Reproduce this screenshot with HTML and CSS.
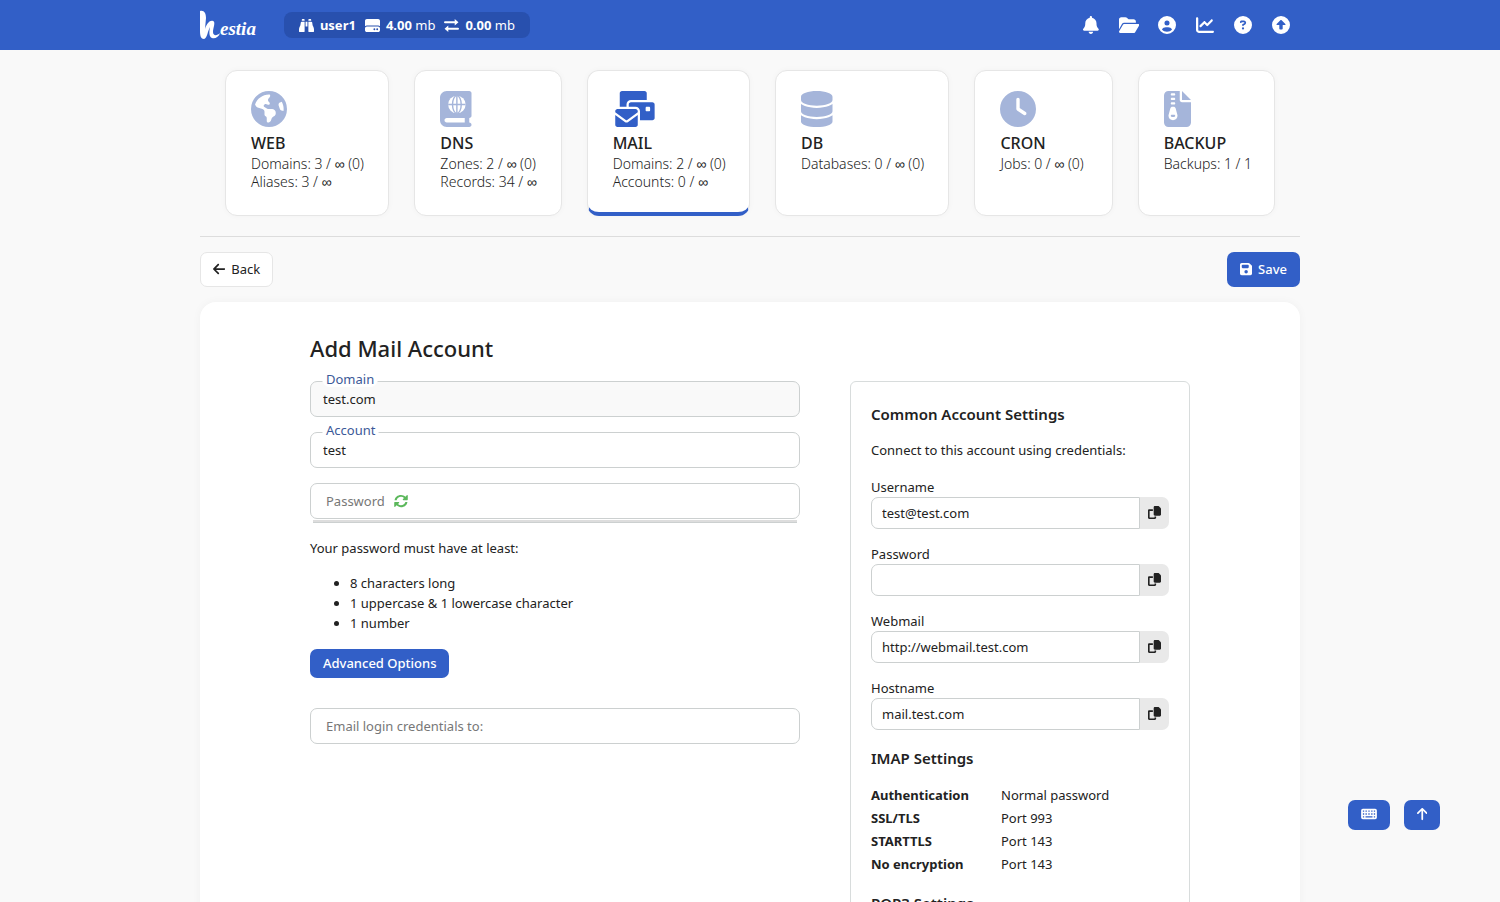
FILE: index.html
```html
<!DOCTYPE html>
<html lang="en">
<head>
<meta charset="utf-8">
<meta name="viewport" content="width=device-width, initial-scale=1">
<title>Add Mail Account - Hestia</title>
<link rel="stylesheet" href="styles.css">
</head>
<body>
<svg class="sprite" aria-hidden="true">
  <symbol id="copy" viewBox="0 0 512 512"><path d="M272 0H396.100c12.700 0 24.900 5.100 33.900 14.100l67.900 67.900c9 9 14.100 21.200 14.100 33.900V336c0 26.500-21.500 48-48 48H272c-26.500 0-48-21.500-48-48V48c0-26.500 21.500-48 48-48zM48 128h144v64H64V448H256V416h64v48c0 26.500-21.500 48-48 48H48c-26.500 0-48-21.500-48-48V176c0-26.500 21.500-48 48-48z"/></symbol>
</svg>
<header class="topbar">
  <div class="container topbar-inner">
    <a class="logo" href="#" aria-label="Hestia">
      <svg class="logo-mark" viewBox="0 0 20 30" aria-hidden="true"><path d="M0 1C4 0 6 3 6 8L5 19C7 13 10 10 13 11C16 12 13 18 13 22C13 26 17 26 20 23C19 27 15 29 12 28C9 27 9 22 10 17C8 20 7 29 4 29C1 29 0 26 0 21Z"/></svg><span>estia</span>
    </a>
    <div class="usage">
      <span class="usage-item"><svg class="i14" viewBox="0 0 512 512"><path d="M128 32h32c17.700 0 32 14.300 32 32V96H96V64c0-17.700 14.300-32 32-32zm64 96V448c0 17.700-14.300 32-32 32H32c-17.700 0-32-14.300-32-32V388.900c0-34.600 9.400-68.600 27.200-98.300C40.900 267.800 49.700 242.400 53 216L60.500 156c2-16 15.600-28 31.800-28H192zm227.800 0c16.100 0 29.800 12 31.800 28L459 216c3.300 26.400 12.100 51.800 25.800 74.600c17.800 29.700 27.200 63.700 27.200 98.300V448c0 17.700-14.300 32-32 32H352c-17.700 0-32-14.300-32-32V128h99.800zM320 64c0-17.700 14.300-32 32-32h32c17.700 0 32 14.300 32 32V96H320V64zm-32 64V288H224V128h64z"/></svg><b>user1</b></span>
      <span class="usage-item"><svg class="i14" viewBox="0 0 512 512"><path d="M0 96C0 60.700 28.700 32 64 32H448c35.300 0 64 28.700 64 64V280.400c-17-15.200-39.400-24.400-64-24.400H64c-24.600 0-47 9.200-64 24.400V96zM64 288H448c35.300 0 64 28.700 64 64v64c0 35.300-28.700 64-64 64H64c-35.300 0-64-28.700-64-64V352c0-35.300 28.700-64 64-64zM320 416a32 32 0 1 0 0-64 32 32 0 1 0 0 64zm128-32a32 32 0 1 0 -64 0 32 32 0 1 0 64 0z"/></svg><span><b>4.00</b> mb</span></span>
      <span class="usage-item"><svg class="i14" viewBox="0 0 448 448"><path d="M320 32L432 128L320 224V160H32a32 32 0 0 1 0-64H320zM128 224V288H416a32 32 0 0 1 0 64H128V416L16 320z"/></svg><span><b>0.00</b> mb</span></span>
    </div>
    <nav class="menu" aria-label="Account">
      <button class="menu-link" type="button" aria-label="Notifications"><svg viewBox="0 0 448 512"><path d="M224 0c-17.700 0-32 14.300-32 32V51.200C119 66 64 130.600 64 208v18.800c0 47-17.300 92.400-48.500 127.600l-7.400 8.300c-8.400 9.400-10.400 22.900-5.300 34.400S19.400 416 32 416H416c12.600 0 24-7.400 29.200-18.900s3.100-25-5.300-34.400l-7.400-8.300C401.300 319.200 384 273.900 384 226.800V208c0-77.400-55-142-128-156.800V32c0-17.700-14.300-32-32-32zm45.300 493.300c12-12 18.700-28.300 18.700-45.300H224 160c0 17 6.700 33.300 18.700 45.300s28.300 18.700 45.300 18.700s33.300-6.700 45.300-18.700z"/></svg></button>
      <a class="menu-link" href="#" aria-label="File manager"><svg viewBox="0 0 576 512"><path d="M88.700 223.800L0 375.800V96C0 60.700 28.700 32 64 32H181.500c17 0 33.300 6.700 45.300 18.700l26.500 26.500c12 12 28.300 18.700 45.300 18.700H416c35.300 0 64 28.700 64 64v32H144c-22.800 0-43.800 12.100-55.300 31.800zm27.600 16.100C122.100 230 132.600 224 144 224H544c11.500 0 22 6.100 27.700 16.100s5.700 22.200-.1 32.100l-112 192C453.900 474 443.400 480 432 480H32c-11.500 0-22-6.100-27.700-16.100s-5.700-22.200 .1-32.100l112-192z"/></svg></a>
      <a class="menu-link" href="#" aria-label="Profile"><svg viewBox="0 0 512 512"><path d="M399 384.200C376.900 345.800 335.400 320 288 320H224c-47.400 0-88.900 25.800-111 64.200c35.200 39.200 86.200 63.800 143 63.800s107.800-24.700 143-63.800zM0 256a256 256 0 1 1 512 0A256 256 0 1 1 0 256zm256 16a72 72 0 1 0 0-144 72 72 0 1 0 0 144z"/></svg></a>
      <a class="menu-link" href="#" aria-label="Statistics"><svg viewBox="0 0 512 512"><path d="M64 64c0-17.700-14.300-32-32-32S0 46.300 0 64V400c0 44.200 35.800 80 80 80H480c17.700 0 32-14.300 32-32s-14.300-32-32-32H80c-8.800 0-16-7.200-16-16V64zm406.600 86.600c12.500-12.500 12.500-32.800 0-45.300s-32.800-12.500-45.300 0L320 210.700l-57.400-57.400c-12.500-12.500-32.800-12.500-45.300 0l-112 112c-12.500 12.500-12.500 32.800 0 45.300s32.800 12.500 45.300 0L240 221.300l57.400 57.400c12.500 12.500 32.800 12.500 45.300 0l128-128z"/></svg></a>
      <a class="menu-link" href="#" aria-label="Help"><svg viewBox="0 0 512 512"><path d="M256 512A256 256 0 1 0 256 0a256 256 0 1 0 0 512zM169.800 165.300c7.900-22.300 29.100-37.300 52.800-37.300h58.300c34.900 0 63.100 28.300 63.100 63.100c0 22.600-12.100 43.500-31.700 54.800L280 264.400c-.2 13-10.900 23.600-24 23.600c-13.300 0-24-10.700-24-24V250.500c0-8.600 4.600-16.500 12.100-20.800l44.300-25.400c4.700-2.700 7.600-7.700 7.600-13.100c0-8.400-6.800-15.100-15.100-15.100H222.600c-3.400 0-6.400 2.100-7.500 5.300l-.4 1.200c-4.400 12.500-18.200 19-30.600 14.600s-19-18.200-14.600-30.600l.4-1.200zM224 352a32 32 0 1 1 64 0 32 32 0 1 1 -64 0z"/></svg></a>
      <a class="menu-link" href="#" aria-label="Log out"><svg viewBox="0 0 512 512"><path d="M256 512A256 256 0 1 0 256 0a256 256 0 1 0 0 512zm11.300-395.300l112 112c4.600 4.600 5.900 11.500 3.500 17.400s-8.300 9.900-14.800 9.900H304v96c0 17.700-14.300 32-32 32H240c-17.700 0-32-14.300-32-32V256H144c-6.500 0-12.300-3.900-14.800-9.900s-1.100-12.900 3.500-17.400l112-112c6.200-6.200 16.400-6.200 22.600 0z"/></svg></a>
    </nav>
  </div>
</header>

<main class="container">
  <nav class="cards" aria-label="Sections">
    <a class="card" href="#">
      <svg viewBox="0 0 512 512"><path d="M57.700 193l9.400 16.400c8.300 14.500 21.900 25.200 38 29.800L163 255.700c17.200 4.900 29 20.600 29 38.500v39.900c0 11 6.200 21 16 25.900s16 14.900 16 25.900v39c0 15.600 14.900 26.900 29.900 22.600c16.100-4.600 28.600-17.500 32.700-33.800l2.800-11.200c4.200-16.900 15.200-31.400 30.300-40l8.100-4.600c15-8.500 24.200-24.500 24.200-41.700v-8.300c0-12.700-5.100-24.900-14.100-33.900l-3.900-3.900c-9-9-21.200-14.100-33.900-14.100H257c-11.100 0-22.100-2.900-31.800-8.400l-34.500-19.700c-4.300-2.500-7.600-6.500-9.200-11.200c-3.200-9.600 1.100-20 10.200-24.500l5.900-3c6.600-3.300 14.300-3.900 21.300-1.500l23.200 7.700c8.200 2.700 17.200-.4 21.900-7.500c4.700-7 4.200-16.300-1.200-22.800l-13.600-16.300c-10-12-9.900-29.500 .3-41.300l15.700-18.300c8.800-10.300 10.200-25 3.500-36.700l-2.400-4.200c-3.500-.2-6.900-.3-10.400-.3C163.100 48 84.400 108.900 57.700 193zM464 256c0-36.800-9.600-71.400-26.400-101.500L412 164.800c-15.700 6.300-23.800 23.800-18.500 39.800l16.900 50.700c3.500 10.400 12 18.300 22.600 20.900l29.100 7.300c1.200-9 1.800-18.200 1.800-27.500zM0 256a256 256 0 1 1 512 0A256 256 0 1 1 0 256z"/></svg>
      <strong>WEB</strong><span>Domains: 3 / <b>∞</b> (0)</span><span>Aliases: 3 / <b>∞</b></span>
    </a>
    <a class="card" href="#">
      <svg viewBox="0 0 448 512"><path d="M0 96C0 43 43 0 96 0H384h32c17.700 0 32 14.300 32 32V352c0 17.700-14.300 32-32 32v64c17.700 0 32 14.300 32 32s-14.300 32-32 32H384 96c-53 0-96-43-96-96V96zM64 416c0 17.700 14.300 32 32 32H352V384H96c-17.700 0-32 14.300-32 32z"/><circle cx="240" cy="192" r="124" fill="#fff"/><g fill="none" stroke="#a5b5da" stroke-width="20"><path d="M116 192h248M240 68v248"/><ellipse cx="240" cy="192" rx="62" ry="126"/></g></svg>
      <strong>DNS</strong><span>Zones: 2 / <b>∞</b> (0)</span><span>Records: 34 / <b>∞</b></span>
    </a>
    <a class="card active" href="#" aria-current="page">
      <svg viewBox="0 0 640 512"><path d="M128 0C110.300 0 96 14.300 96 32V224h96V192c0-35.300 28.700-64 64-64H480V32c0-17.700-14.300-32-32-32H128zM256 160c-17.700 0-32 14.300-32 32v32h96c35.300 0 64 28.700 64 64V416H560c17.700 0 32-14.300 32-32V192c0-17.700-14.300-32-32-32H256zm224 64h32c8.800 0 16 7.200 16 16v32c0 8.800-7.200 16-16 16H480c-8.800 0-16-7.200-16-16V240c0-8.800 7.200-16 16-16zM64 256c-17.700 0-32 14.300-32 32v13L187.100 415.900c1.400 1 3.100 1.600 4.900 1.600s3.500-.6 4.900-1.600L352 301V288c0-17.700-14.300-32-32-32H64zm288 84.800L216 441.600c-6.900 5.100-15.300 7.900-24 7.900s-17-2.800-24-7.900L32 340.800V480c0 17.700 14.300 32 32 32H320c17.700 0 32-14.300 32-32V340.800z"/></svg>
      <strong>MAIL</strong><span>Domains: 2 / <b>∞</b> (0)</span><span>Accounts: 0 / <b>∞</b></span>
    </a>
    <a class="card" href="#">
      <svg viewBox="0 0 448 512"><path d="M448 80v48c0 44.200-100.300 80-224 80S0 172.200 0 128V80C0 35.800 100.300 0 224 0S448 35.800 448 80zM393.200 214.700c20.800-7.400 39.900-16.900 54.800-28.600V288c0 44.200-100.300 80-224 80S0 332.200 0 288V186.100c14.900 11.800 34 21.200 54.800 28.600C99.700 230.700 159.500 240 224 240s124.300-9.300 169.200-25.300zM0 346.100c14.900 11.800 34 21.200 54.800 28.600C99.700 390.700 159.500 400 224 400s124.300-9.300 169.200-25.300c20.800-7.400 39.900-16.900 54.800-28.600V432c0 44.200-100.300 80-224 80S0 476.200 0 432V346.100z"/></svg>
      <strong>DB</strong><span>Databases: 0 / <b>∞</b> (0)</span>
    </a>
    <a class="card" href="#">
      <svg viewBox="0 0 512 512"><path d="M256 0a256 256 0 1 1 0 512A256 256 0 1 1 256 0zM232 120V256c0 8 4 15.500 10.700 20l96 64c11 7.400 25.900 4.400 33.300-6.700s4.400-25.900-6.700-33.300L280 243.200V120c0-13.300-10.700-24-24-24s-24 10.700-24 24z"/></svg>
      <strong>CRON</strong><span>Jobs: 0 / <b>∞</b> (0)</span>
    </a>
    <a class="card" href="#">
      <svg viewBox="0 0 384 512"><path fill-rule="evenodd" d="M64 0C28.700 0 0 28.700 0 64V448c0 35.300 28.700 64 64 64H320c35.300 0 64-28.700 64-64V160H256c-17.700 0-32-14.300-32-32V0H64zM256 0V128H384L256 0zM96 48c0-8.800 7.200-16 16-16h32c8.800 0 16 7.200 16 16s-7.200 16-16 16H112c-8.800 0-16-7.200-16-16zm0 64c0-8.800 7.200-16 16-16h32c8.800 0 16 7.200 16 16s-7.200 16-16 16H112c-8.800 0-16-7.200-16-16zm0 64c0-8.800 7.200-16 16-16h32c8.800 0 16 7.200 16 16s-7.200 16-16 16H112c-8.800 0-16-7.200-16-16zm-6.300 71.800c3.700-14 16.400-23.800 30.900-23.800h14.800c14.500 0 27.200 9.700 30.900 23.800l23.500 88.200c1.400 5.400 2.100 10.900 2.100 16.400c0 35.200-28.800 63.700-64 63.700s-64-28.500-64-63.700c0-5.500 .7-11.100 2.100-16.400l23.500-88.200zM112 336c-8.800 0-16 7.200-16 16s7.200 16 16 16h32c8.800 0 16-7.200 16-16s-7.200-16-16-16H112z"/></svg>
      <strong>BACKUP</strong><span>Backups: 1 / 1</span>
    </a>
  </nav>

  <div class="toolbar">
    <a class="button secondary" href="#"><svg viewBox="0 0 448 512"><path d="M9.400 233.400c-12.500 12.500-12.500 32.800 0 45.300l160 160c12.500 12.500 32.800 12.500 45.300 0s12.500-32.800 0-45.300L109.200 288 416 288c17.700 0 32-14.300 32-32s-14.300-32-32-32l-306.700 0L214.600 118.600c12.500-12.500 12.500-32.800 0-45.300s-32.800-12.500-45.300 0l-160 160z"/></svg>Back</a>
    <button class="button primary" type="submit" form="mail-form"><svg viewBox="0 0 448 512"><path d="M64 32C28.700 32 0 60.700 0 96V416c0 35.300 28.700 64 64 64H384c35.300 0 64-28.700 64-64V173.300c0-17-6.700-33.300-18.700-45.300L352 50.700C340 38.700 323.700 32 306.700 32H64zm0 96c0-17.700 14.300-32 32-32H288c17.700 0 32 14.300 32 32v64c0 17.700-14.300 32-32 32H96c-17.700 0-32-14.300-32-32V128zM224 288a64 64 0 1 1 0 128 64 64 0 1 1 0-128z"/></svg>Save</button>
  </div>

  <form class="panel" id="mail-form">
    <h1>Add Mail Account</h1>
    <div class="columns">
      <div class="left">
        <div class="field raised"><label for="domain">Domain</label><input id="domain" type="text" value="test.com" disabled></div>
        <div class="field raised"><label for="account">Account</label><input id="account" type="text" value="test"></div>
        <div class="field">
          <div class="inner"><label for="password">Password</label><button class="refresh" type="button" aria-label="Generate password"><svg viewBox="0 0 512 512"><path d="M20 224C36 110 132 32 256 32c66 0 120 26 160 66l52-52c16-14 36-4 36 16V200c0 14-8 24-24 24H344c-22 0-30-24-16-38l38-38c-30-28-66-44-110-44-78 0-142 50-160 120zM492 288C476 402 380 480 256 480c-66 0-120-26-160-66l-52 52c-16 14-36 4-36-16V312c0-14 8-24 24-24H168c22 0 30 24 16 38l-38 38c30 28 66 44 110 44 78 0 142-50 160-120z"/></svg></button></div>
          <input id="password" type="text">
          <div class="strength"></div>
        </div>
        <p>Your password must have at least:</p>
        <ul><li>8 characters long</li><li>1 uppercase &amp; 1 lowercase character</li><li>1 number</li></ul>
        <button class="button primary advanced" type="button">Advanced Options</button>
        <div class="field"><div class="inner"><label for="email">Email login credentials to:</label></div><input id="email" type="email"></div>
      </div>
      <aside class="info">
        <h2>Common Account Settings</h2>
        <p>Connect to this account using credentials:</p>
        <div class="copies">
          <div><label for="c-user">Username</label><div class="copy-row"><input id="c-user" type="text" value="test@test.com" readonly><button type="button" aria-label="Copy username"><svg><use href="#copy"/></svg></button></div></div>
          <div><label for="c-pass">Password</label><div class="copy-row"><input id="c-pass" type="text" readonly><button type="button" aria-label="Copy password"><svg><use href="#copy"/></svg></button></div></div>
          <div><label for="c-web">Webmail</label><div class="copy-row"><input id="c-web" type="text" value="http://webmail.test.com" readonly><button type="button" aria-label="Copy webmail"><svg><use href="#copy"/></svg></button></div></div>
          <div><label for="c-host">Hostname</label><div class="copy-row"><input id="c-host" type="text" value="mail.test.com" readonly><button type="button" aria-label="Copy hostname"><svg><use href="#copy"/></svg></button></div></div>
        </div>
        <h2>IMAP Settings</h2>
        <dl><dt>Authentication</dt><dd>Normal password</dd><dt>SSL/TLS</dt><dd>Port 993</dd><dt>STARTTLS</dt><dd>Port 143</dd><dt>No encryption</dt><dd>Port 143</dd></dl>
        <h2>POP3 Settings</h2>
      </aside>
    </div>
  </form>
</main>

<div class="floating">
  <button class="button primary" type="button" aria-label="Shortcuts"><svg class="keyboard" viewBox="0 0 576 512"><path fill-rule="evenodd" d="M64 64H512a64 64 0 0 1 64 64V384a64 64 0 0 1-64 64H64a64 64 0 0 1-64-64V128a64 64 0 0 1 64-64zM64 128v48h48v-48zm96 0v48h48v-48zm104 0v48h48v-48zm104 0v48h48v-48zm96 0v48h48v-48zM64 232v48h48v-48zm96 0v48h48v-48zm104 0v48h48v-48zm104 0v48h48v-48zm96 0v48h48v-48zM64 336v48h48v-48zm96 0v48h256v-48zm304 0v48h48v-48z"/></svg></button>
  <button class="button primary" type="button" aria-label="Top"><svg viewBox="0 0 384 512"><path d="M214.600 41.400c-12.500-12.500-32.800-12.500-45.300 0l-160 160c-12.500 12.500-12.500 32.800 0 45.300s32.800 12.500 45.300 0L160 141.200V448c0 17.700 14.300 32 32 32s32-14.300 32-32V141.200L329.400 246.600c12.500 12.500 32.800 12.500 45.300 0s12.500-32.800 0-45.300l-160-160z"/></svg></button>
</div>
</body>
</html>
```
FILE: styles.css
```css
* { box-sizing: border-box; }
body {
  margin: 0;
  height: 100vh;
  overflow: hidden;
  background: #f9f9f9;
  color: #222;
  font: 13px/20px "Noto Sans", sans-serif;
}
h1, h2, p, ul, dl, dd { margin: 0; }
a { color: inherit; text-decoration: none; }
button, input { font: inherit; color: inherit; }
button { border: 0; padding: 0; cursor: pointer; background: none; }
svg { fill: currentColor; }
.sprite { display: none; }
.container { width: 100%; max-width: 1100px; margin: 0 auto; }

.topbar { background: #325fc7; color: #fff; }
.topbar-inner { display: flex; align-items: center; height: 50px; }
.logo { display: flex; align-items: center; font: bold italic 19px/24px "Liberation Serif", serif; }
.logo span { padding-top: 8px; }
.logo-mark { width: 20px; height: 30px; }
.usage {
  display: flex;
  gap: 9px;
  margin-left: 28px;
  padding: 3px 15px;
  border-radius: 8px;
  background: #2850ae;
}
.usage-item { display: flex; align-items: center; gap: 6px; }
.i14 { width: 15px; height: 15px; }
.menu { display: flex; margin-left: auto; }
.menu-link { display: flex; align-items: center; justify-content: center; width: 38px; height: 48px; }
.menu-link svg { height: 18px; }

.cards {
  display: grid;
  grid-template-columns: 164fr 147fr 163fr 174fr 138fr 137fr;
  gap: 25px;
  padding: 20px 25px;
  border-bottom: 1px solid #ddd;
}
.card {
  display: flex;
  flex-direction: column;
  align-items: flex-start;
  height: 146px;
  padding: 20px 15px 20px 25px;
  border: 1px solid #e6e6e6;
  border-radius: 12px;
  background: #fff;
  box-shadow: 0 0 6px rgba(0, 0, 0, 0.03);
  font-size: 14px;
  line-height: 18px;
  font-weight: 300;
  white-space: nowrap;
}
.card svg { height: 36px; fill: #a5b5da; }
.card strong { margin-top: 5px; font-size: 16px; line-height: 23px; font-weight: 500; }
.card b { font-weight: 400; }
.card.active { border-bottom: 4px solid #325fc7; }
.card.active svg { fill: #325fc7; }

.toolbar { display: flex; justify-content: space-between; padding: 15px 0; }
.button {
  display: inline-flex;
  align-items: center;
  justify-content: center;
  gap: 6px;
  height: 35px;
  padding: 0 12px 2px;
  border: 1px solid transparent;
  border-radius: 7px;
}
.button svg { height: 14px; }
.primary { background: #325fc7; color: #fff; font-weight: 500; }
.secondary { background: #fff; border-color: #e6e6e6; }

.panel {
  padding: 30px 110px 40px;
  border-radius: 16px;
  background: #fff;
  box-shadow: 0 0 10px rgba(0, 0, 0, 0.04);
}
h1 { margin-bottom: 17px; font-size: 22px; line-height: 32px; font-weight: 500; }
.columns { display: grid; grid-template-columns: minmax(0, 1fr) 340px; gap: 50px; align-items: start; }
.left { display: flex; flex-direction: column; gap: 15px; }
.field { position: relative; }
input {
  display: block;
  width: 100%;
  height: 36px;
  padding: 0 12px;
  border: 1px solid #ccd0d0;
  border-radius: 7px;
  background: #fff;
}
input:disabled { background: #f9f9f9; color: #222; }
.raised label {
  position: absolute;
  top: -10px;
  left: 12px;
  padding: 0 4px;
  border-radius: 8px;
  background: #fff;
  color: #3b5998;
  font-size: 13px;
  line-height: 16px;
}
.inner { position: absolute; top: 8px; left: 16px; display: flex; align-items: center; gap: 9px; color: #777; }
.refresh { display: flex; color: #5cb85c; }
.refresh svg { width: 14px; height: 14px; }
.strength { height: 3px; margin: 1px 3px 0; border-bottom: 1px solid #ccd0d0; background: #ddd; }
ul { padding-left: 40px; margin-bottom: 1px; }
.advanced { align-self: flex-start; height: 29px; margin-bottom: 15px; }

.info { padding: 20px; border: 1px solid #d8dcdc; border-radius: 6px; }
h2 { margin: 0 0 14px; font-size: 15px; line-height: 24px; font-weight: 600; }
.info p { margin-bottom: 16px; line-height: 21px; }
.copies { display: grid; gap: 15px; margin-bottom: 16px; }
.copies label { display: block; }
.copy-row { display: flex; }
.copy-row input { flex: 1; min-width: 0; height: 32px; padding: 0 10px; border-radius: 7px 0 0 7px; }
.copy-row button { display: flex; align-items: center; justify-content: center; width: 29px; padding-bottom: 2px; border-radius: 0 7px 7px 0; background: #e9e9e9; }
.copy-row svg { width: 13px; height: 13px; }
dl { display: grid; grid-template-columns: 130px 1fr; margin-bottom: 15px; line-height: 23px; }
dt { font-weight: 700; }

.floating { position: fixed; right: 60px; bottom: 72px; display: flex; gap: 14px; }
.floating .button { height: 30px; }
.keyboard { width: 16px; }
```
